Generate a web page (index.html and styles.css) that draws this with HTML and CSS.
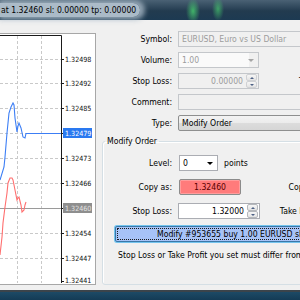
FILE: index.html
```html
<!DOCTYPE html>
<html lang="en">
<head>
    <meta charset="UTF-8">
    <meta name="viewport" content="width=device-width, initial-scale=1.0">
    <title>Order</title>
    <link rel="stylesheet" href="styles.css">
</head>
<body>
    <div class="titlebar">
      <span class="title-text">at 1.32460 sl: 0.00000 tp: 0.00000</span>
    </div>

    <div class="window">
      <div class="chart-pane">
        <svg class="chart" width="94" height="250" viewBox="0 0 94 250">
          <path class="grid" d="M17.5 2V249M41.5 2V249M0 25.5H61M0 49.5H61M0 74.5H61M0 99.5H61M0 124.5H61M0 149.5H61M0 199.5H61M0 224.5H61"/>
          <path class="order-line" d="M0 174.5H61"/>
          <polyline class="line-bid" points="0,221 2,203 3,189 5,173 7,159 8,149 10,144 12,144 13,146 15,156 17,166 18,164 19,163 21,171 22,178 24,176 25,171 26,168"/>
          <polyline class="line-ask" points="0,146 4,133 5,123 7,99 9,79 11,73 13,69 14,71 15,84 17,98 18,92 19,89 21,94 23,103 25,104 26,99.5 61,99.5"/>
          <path class="frame" d="M0 1.5H61.5V249"/>
          <path class="frame" d="M61 25.5h3M61 49.5h3M61 74.5h3M61 99.5h3M61 124.5h3M61 149.5h3M61 174.5h3M61 199.5h3M61 224.5h3M61 247.5h3"/>
          <rect class="tag-ask" x="63" y="94" width="29" height="10"/>
          <rect class="tag-bid" x="63" y="169" width="29" height="10"/>
          <g class="prices">
            <text x="65" y="25.5">1.32498</text>
            <text x="65" y="49.5">1.32492</text>
            <text x="65" y="74.5">1.32485</text>
            <text x="65" y="99.5" class="on-ask">1.32479</text>
            <text x="65" y="124.5">1.32473</text>
            <text x="65" y="149.5">1.32466</text>
            <text x="65" y="174.5" class="on-bid">1.32460</text>
            <text x="65" y="199.5">1.32454</text>
            <text x="65" y="224.5">1.32447</text>
            <text x="65" y="246">1.32441</text>
          </g>
        </svg>
      </div>

      <div class="form">
        <div class="row">
          <span class="lbl">Symbol:</span>
          <div class="field field-wide">EURUSD, Euro vs US Dollar</div>
        </div>
        <div class="row">
          <span class="lbl">Volume:</span>
          <div class="field field-num field-combo">
            <span class="value">1.00</span>
            <span class="arrow arrow-off"></span>
          </div>
        </div>
        <div class="row">
          <span class="lbl">Stop Loss:</span>
          <div class="field field-num">
            <span class="value value-right">0.00000</span>
            <span class="spinner spinner-off"><i class="up"></i><i class="down"></i></span>
          </div>
          <span class="side side-top">Take Profit:</span>
        </div>
        <div class="row">
          <span class="lbl">Comment:</span>
          <div class="field field-wide"></div>
        </div>
        <div class="row">
          <span class="lbl">Type:</span>
          <div class="field field-wide field-select">Modify Order</div>
        </div>

        <fieldset class="group">
          <legend>Modify Order</legend>
          <div class="grow grow-level">
            <span class="lbl">Level:</span>
            <div class="field field-on field-level">
              <span class="value">0</span>
              <span class="arrow"></span>
            </div>
            <span class="unit">points</span>
          </div>
          <div class="grow">
            <span class="lbl">Copy as:</span>
            <div class="btn-copy">1.32460</div>
            <span class="side side-copy">Copy as:</span>
          </div>
          <div class="grow">
            <span class="lbl">Stop Loss:</span>
            <div class="field field-on field-num field-sl">
              <span class="value value-right">1.32000</span>
              <span class="spinner"><i class="up"></i><i class="down"></i></span>
            </div>
            <span class="side side-tp">Take Profit:</span>
          </div>
          <div class="btn-modify">Modify #953655 buy 1.00 EURUSD sl: 1.32000 tp: 0.00000</div>
          <p class="note">Stop Loss or Take Profit you set must differ from market price</p>
        </fieldset>
      </div>
    </div>

    <div class="taskbar"></div>
</body>
</html>
```

FILE: styles.css
```css
html {
  box-sizing: border-box;
}

*,
*:before,
*:after {
  box-sizing: inherit;
}

body {
  margin: 0;
  width: 300px;
  height: 300px;
  overflow: hidden;
  background: #f0f0f0;
  font-family: "DejaVu Sans Condensed", "DejaVu Sans", sans-serif;
  font-stretch: condensed;
  font-size: 8.6px;
  color: #000;
}

/* window caption */
.titlebar {
  height: 20px;
  display: flex;
  align-items: center;
  white-space: nowrap;
  background:
    radial-gradient(ellipse 7px 13px at 193px 11px, rgba(70, 200, 110, 0.85), transparent),
    radial-gradient(ellipse 6px 12px at 218px 9px, rgba(70, 200, 110, 0.7), transparent),
    linear-gradient(#4a6174, #223b4f 55%, #1d3a52);
}
.title-text {
  height: 14px;
  line-height: 14px;
  padding: 0 4px 0 1px;
  font-size: 8.6px;
  border-radius: 0 7px 7px 0;
  background: rgba(178, 193, 206, 0.95);
  box-shadow: 2px 0 5px 3px rgba(170, 186, 200, 0.8);
}

.window {
  display: flex;
  align-items: flex-start;
  height: 270px;
}

/* chart */
.chart-pane {
  flex: none;
  width: 96px;
  height: 252px;
  margin-top: 13px;
  background: #fff;
  border: 1px solid #a7a7a7;
  border-left: 0;
}
.chart {
  display: block;
}
.chart .grid {
  stroke: #c9c9c9;
  stroke-dasharray: 3 2;
  fill: none;
}
.chart .order-line {
  stroke: #9a9a9a;
  fill: none;
}
.chart .frame {
  stroke: #1a1a1a;
  fill: none;
}
.chart .line-ask {
  stroke: #3c7ef5;
  stroke-width: 1.1;
  fill: none;
}
.chart .line-bid {
  stroke: #ff6f6f;
  stroke-width: 1.1;
  fill: none;
}
.chart .tag-ask {
  fill: #2a79f0;
}
.chart .tag-bid {
  fill: #8e8e8e;
}
.prices text {
  font-family: "DejaVu Sans Condensed", "DejaVu Sans", sans-serif;
  font-size: 7.1px;
  dominant-baseline: central;
  fill: #111;
}
.prices .on-ask {
  fill: #fff;
}
.prices .on-bid {
  fill: #e4e4e4;
}

/* order form */
.form {
  flex: 1;
  min-width: 0;
  padding: 11px 0 0 6px;
  white-space: nowrap;
}
.row {
  display: flex;
  align-items: center;
  height: 16px;
  margin-bottom: 5px;
}
.lbl {
  flex: none;
  width: 70px;
  margin-right: 6px;
  text-align: right;
}

.field {
  flex: none;
  display: flex;
  align-items: center;
  height: 16px;
  padding: 0 0 0 3px;
  border: 1px solid #c4c7cb;
  background: #f0f0f0;
  color: #9c9c9c;
}
.field-wide {
  width: 200px;
}
.field-num {
  width: 81px;
}
.field-combo {
  background: linear-gradient(90deg, #fafafa 70px, #f0f0f0 70px);
}
.field-select {
  color: #000;
  border-color: #8e8f8f;
  border-radius: 2px;
  background: linear-gradient(#f3f3f3, #ebebeb 50%, #dcdcdc 51%, #d6d6d6);
}
.field-on {
  background: #fff;
  color: #000;
  border-color: #abadb3;
}

.value {
  flex: 1;
}
.value-right {
  text-align: right;
  padding-right: 3px;
}

.arrow {
  width: 0;
  height: 0;
  margin: 0 4px 0 0;
  border-left: 3px solid transparent;
  border-right: 3px solid transparent;
  border-top: 3px solid #000;
}
.arrow-off {
  margin-right: 4px;
  border-top-color: #a5a5a5;
}

.spinner {
  display: flex;
  flex-direction: column;
  width: 11px;
  height: 14px;
  margin-right: 1px;
}
.spinner i {
  flex: 1;
  display: flex;
  justify-content: center;
  align-items: center;
  border: 1px solid #b5b8bc;
  border-radius: 2px;
  background: linear-gradient(#f6f6f6, #e3e3e3);
}
.spinner i:before {
  content: "";
  border-left: 2px solid transparent;
  border-right: 2px solid transparent;
}
.spinner .up:before {
  border-bottom: 2px solid #4d6185;
}
.spinner .down:before {
  border-top: 2px solid #4d6185;
}
.spinner-off i:before {
  border-top-color: #b9b9b9;
  border-bottom-color: #b9b9b9;
}
.spinner-off i {
  border-color: #cfd1d4;
}

.side {
  flex: none;
  text-align: right;
}
.side-top {
  margin-left: 40px;
  text-align: left;
}
.side-copy {
  width: 81px;
}
.side-tp {
  width: 62px;
}

/* modify order group */
.group {
  width: 320px;
  margin: 0;
  padding: 0 0 24px;
  min-width: 0;
  border: 1px solid #d5dfe5;
  border-radius: 3px;
  box-shadow: inset 1px 1px 0 #fff;
}
.group legend {
  margin-left: 2px;
  padding: 0 2px;
  line-height: 10px;
}
.grow {
  display: flex;
  align-items: center;
  height: 16px;
  margin-bottom: 8px;
}
.grow-level {
  margin-top: 9px;
}
.grow .lbl {
  width: 69px;
  margin-right: 7px;
}
.field-level {
  width: 39px;
}
.unit {
  margin-left: 6px;
}
.field-sl {
  width: 82px;
  margin-left: -1px;
}

.btn-copy {
  flex: none;
  display: flex;
  align-items: center;
  justify-content: center;
  width: 62px;
  height: 16px;
  border: 1px solid #8b8b8b;
  border-radius: 2px;
  background: #ff7b7b;
  box-shadow: inset 0 0 0 1px #ff9c9c;
  color: #5a0000;
}

.btn-modify {
  width: 320px;
  height: 16px;
  margin: -1px 0 0 12px;
  padding-left: 41px;
  line-height: 14px;
  border: 1px solid #3a78a8;
  border-radius: 2px;
  background: #a7c3f7;
  box-shadow: 0 0 0 1px #74c4ee;
  outline: 1px dotted #1a1a1a;
  outline-offset: -3px;
}

.note {
  margin: 8px 0 0 15px;
  line-height: 10px;
}

.taskbar {
  height: 10px;
  background: linear-gradient(#3b444b 0, #3b444b 2px, #1d4a66 2px, #143b55);
}
```
